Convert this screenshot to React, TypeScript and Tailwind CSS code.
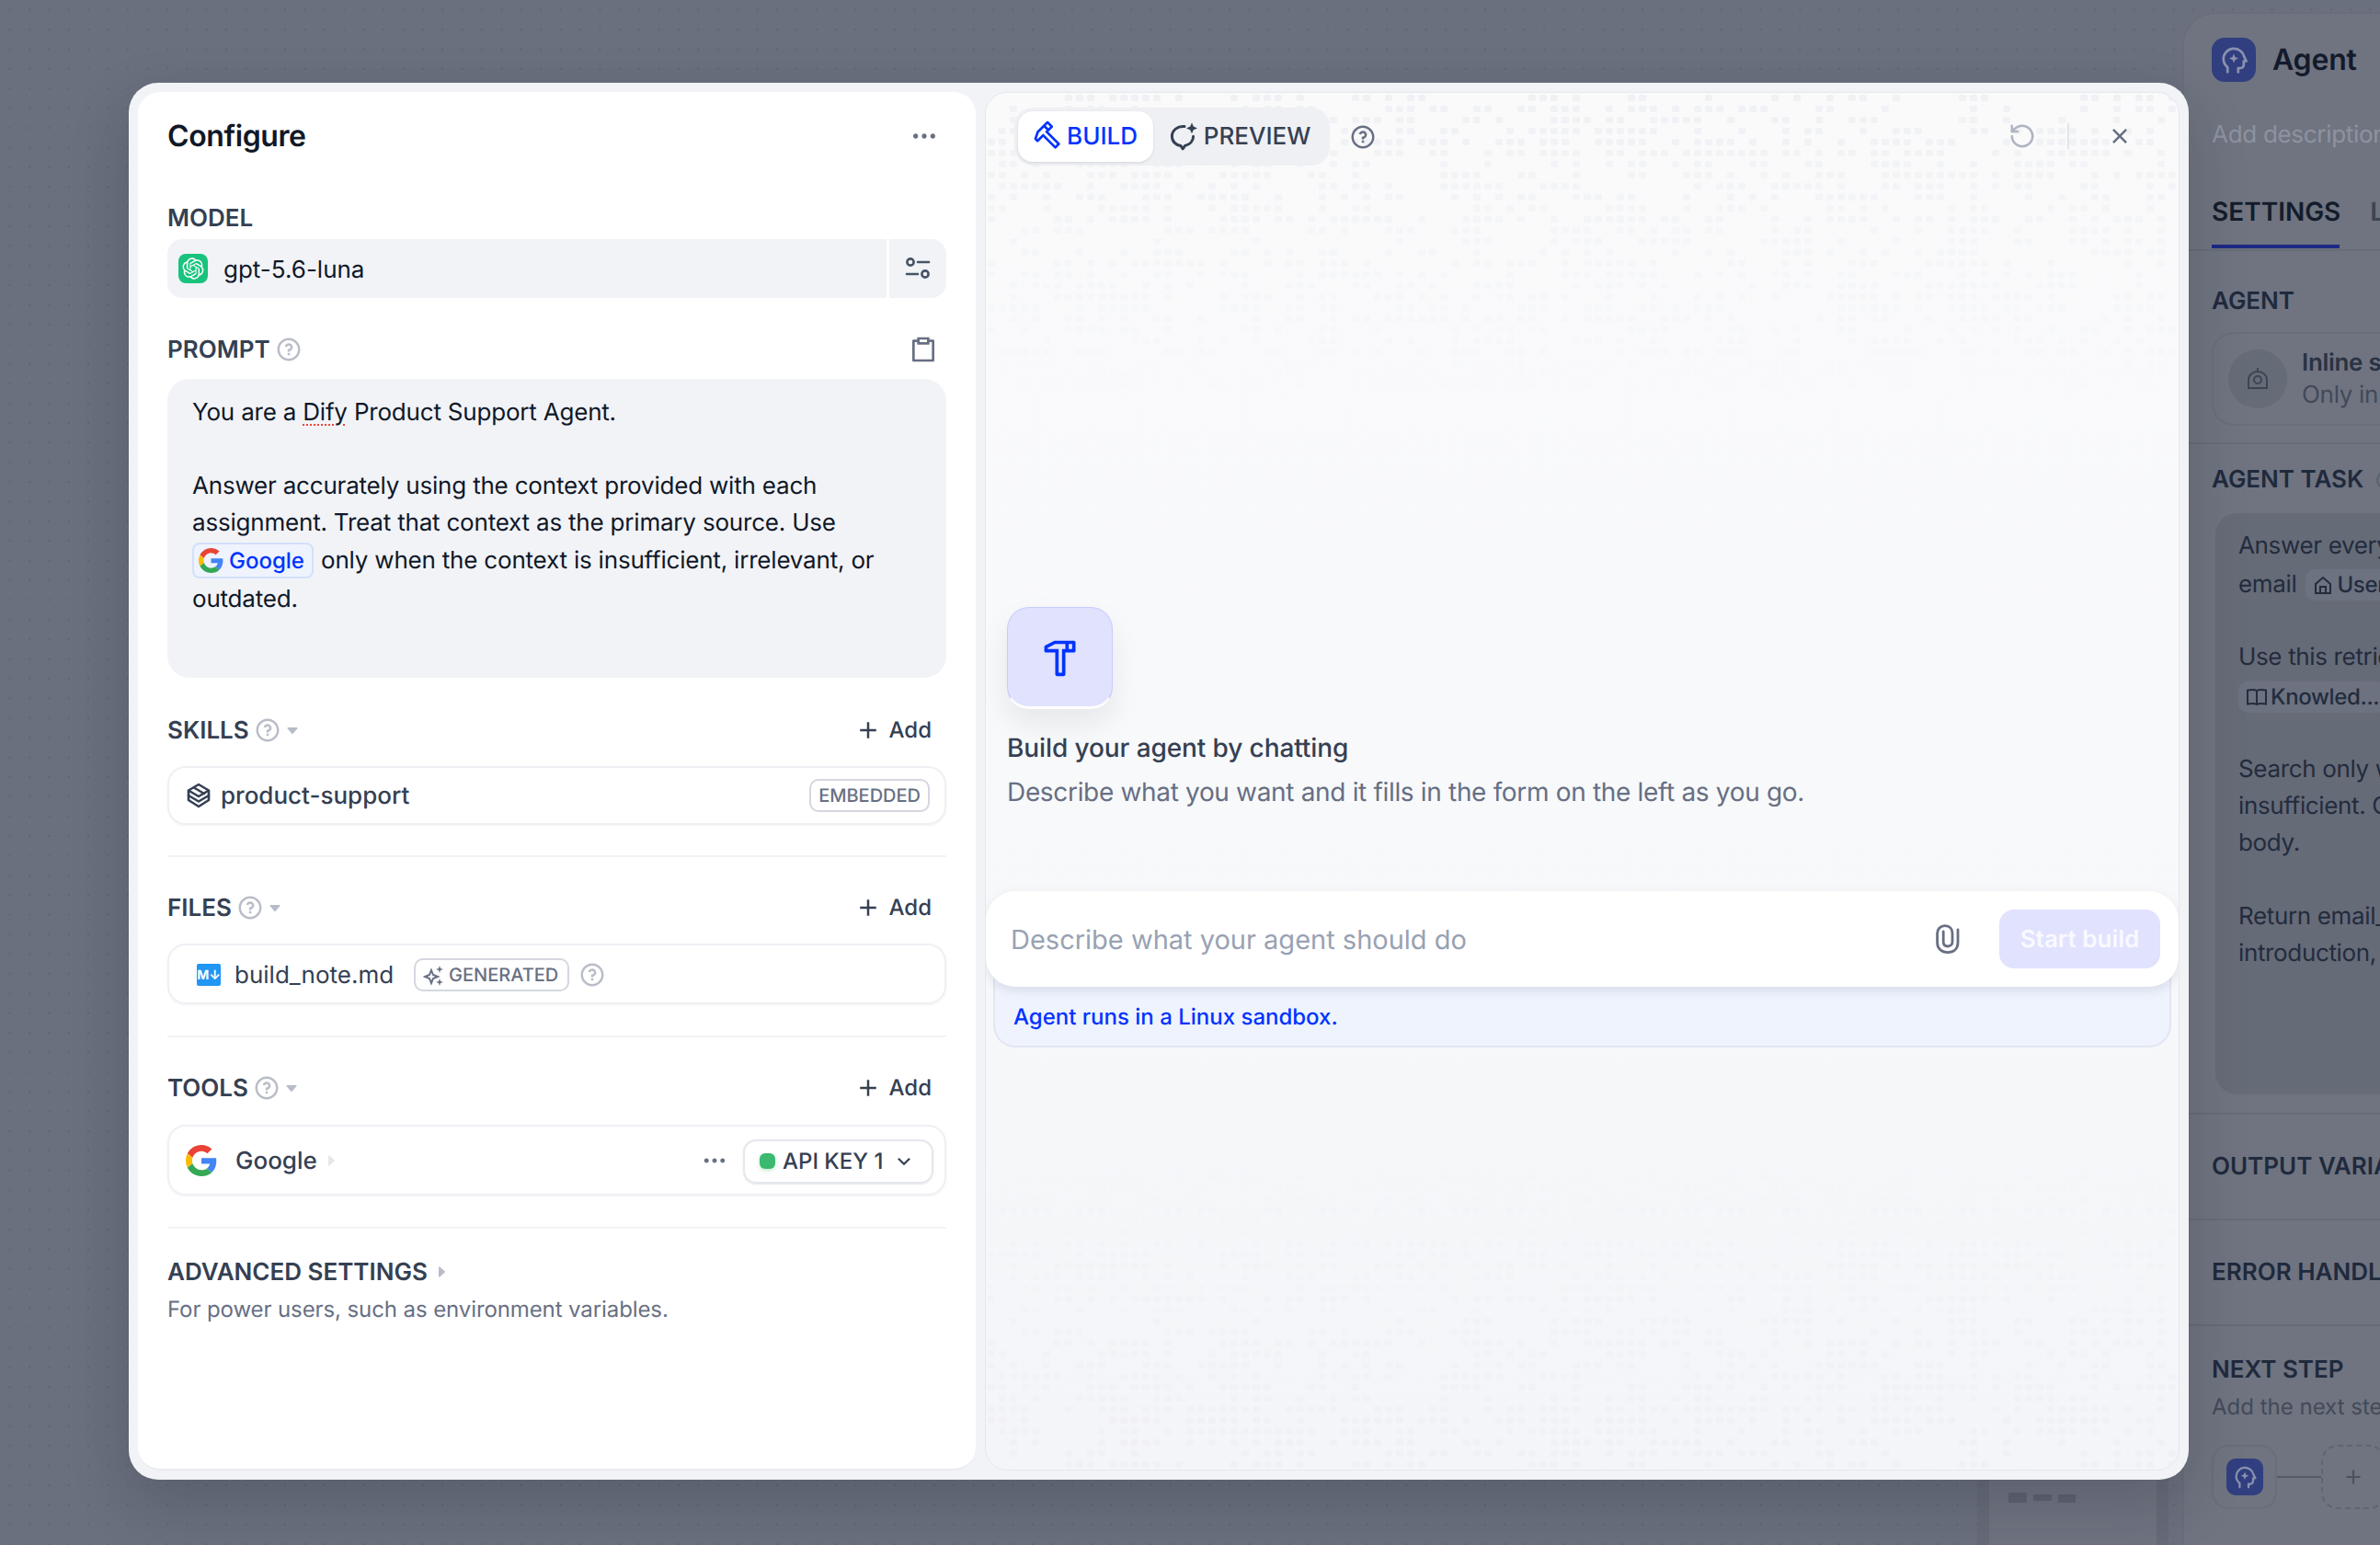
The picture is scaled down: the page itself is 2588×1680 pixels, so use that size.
import React from "react";
import {
  RiAddLine,
  RiArrowDownSLine,
  RiClipboardLine,
  RiCloseLine,
  RiHammerLine,
  RiMoreFill,
  RiQuestionLine,
  RiOpenaiFill,
} from "react-icons/ri";
import { RotateCcw } from "lucide-react";

function GoogleG({ size }: { size: number }) {
  return (
    <svg width={size} height={size} viewBox="0 0 48 48" className="shrink-0">
      <path fill="#EA4335" d="M24 9.5c3.54 0 6.71 1.22 9.21 3.6l6.85-6.85C35.9 2.38 30.47 0 24 0 14.62 0 6.51 5.38 2.56 13.22l7.98 6.19C12.43 13.72 17.74 9.5 24 9.5z" />
      <path fill="#4285F4" d="M46.98 24.55c0-1.57-.15-3.09-.38-4.55H24v9.02h12.94c-.58 2.96-2.26 5.48-4.78 7.18l7.73 6c4.51-4.18 7.09-10.36 7.09-17.65z" />
      <path fill="#FBBC05" d="M10.53 28.59c-.48-1.45-.76-2.99-.76-4.59s.27-3.14.76-4.59l-7.98-6.19C.92 16.46 0 20.12 0 24c0 3.88.92 7.54 2.56 10.78l7.97-6.19z" />
      <path fill="#34A853" d="M24 48c6.48 0 11.93-2.13 15.89-5.81l-7.73-6c-2.15 1.45-4.92 2.3-8.16 2.3-6.26 0-11.57-4.22-13.47-9.91l-7.98 6.19C6.51 42.62 14.62 48 24 48z" />
    </svg>
  );
}

function Caret({ right = false, light = false }: { right?: boolean; light?: boolean }) {
  return (
    <svg width="14" height="14" viewBox="0 0 14 14" className={right ? "-rotate-90 shrink-0" : "shrink-0"}>
      <path d="M2.2 4h9.6a.8.8 0 0 1 .6 1.3l-4.8 5.4a.8.8 0 0 1-1.2 0L1.6 5.3A.8.8 0 0 1 2.2 4z" fill={light ? "#e6e8ed" : "#b8bcc8"} />
    </svg>
  );
}

function Help({ size = 30 }: { size?: number }) {
  return <RiQuestionLine size={size} className="text-[#b9bdc8] shrink-0" />;
}

function Sliders() {
  return (
    <svg width="30" height="30" viewBox="0 0 30 30" fill="none" stroke="#475467" strokeWidth="2.6" strokeLinecap="round">
      <circle cx="7" cy="8" r="3.6" />
      <path d="M15 8h12" />
      <path d="M3 21h12" />
      <circle cx="23" cy="21" r="3.6" />
    </svg>
  );
}

function BoxIcon() {
  return (
    <svg width="28" height="30" viewBox="0 0 28 30" fill="none" stroke="#344054" strokeWidth="2.6" strokeLinejoin="round" strokeLinecap="round" className="shrink-0">
      <path d="M14 3 L25 9.5 L14 16 L3 9.5 Z" />
      <path d="M3 10 V20 L14 27 L25 20 V10" />
      <path d="M3 15 L14 21.5 L25 15" />
      <path d="M9 6.5 L20 13" />
    </svg>
  );
}

function Sparks() {
  return (
    <svg width="24" height="24" viewBox="0 0 24 24" fill="none" stroke="#676f83" strokeWidth="2" className="shrink-0">
      <path d="M9 7 L11 12 L16 14 L11 16 L9 21 L7 16 L2 14 L7 12 Z" />
      <path d="M18 2 L19 5 L22 6 L19 7 L18 10 L17 7 L14 6 L17 5 Z" fill="#676f83" stroke="none" />
      <path d="M18 16 L19 19 L22 20 L19 21 L18 24 L17 21 L14 20 L17 19 Z" fill="#676f83" stroke="none" />
    </svg>
  );
}

function PreviewIcon() {
  return (
    <svg width="32" height="32" viewBox="0 0 32 32" fill="none" className="shrink-0">
      <path d="M17 4.6C9.6 3.8 3.4 8.6 3.4 15.2c0 5.4 4 9.6 9.6 10.4l2.2 3.2 2.4-3.4c5.2-1.2 9-5.2 9-10.2" stroke="#354052" strokeWidth="3" strokeLinejoin="round" strokeLinecap="round" />
      <path d="M25 0.5 L26.8 4.6 L31 6.4 L26.8 8.2 L25 12.3 L23.2 8.2 L19 6.4 L23.2 4.6 Z" fill="#354052" />
    </svg>
  );
}

function Clip() {
  return (
    <svg width="30" height="34" viewBox="0 0 30 34" fill="none" stroke="#676f83" strokeWidth="2.8" strokeLinecap="round">
      <path d="M26 7 V21 C26 27.6 21.6 31.6 15 31.6 C8.4 31.6 3.6 27.6 3.6 21 V11 C3.6 6 7 2.6 12 2.6 C17 2.6 20 6 20 11 V20 C20 23 18 25 15 25 C12 25 10.2 23 10.2 20 V9" />
    </svg>
  );
}

function HeadIcon({ size, color }: { size: number; color: string }) {
  return (
    <svg width={size} height={size} viewBox="0 0 24 24" fill="none" stroke={color} strokeWidth="1.8" strokeLinecap="round" strokeLinejoin="round">
      <path d="M7.5 21v-3.6C5.6 15.9 4.5 13.8 4.5 11.4a7.6 7.6 0 0 1 15-1.6l1.6 3.2h-1.9v2.6a2.4 2.4 0 0 1-2.4 2.4h-1.6V21" />
      <path d="M12 7.6l1 2.4 2.4 1-2.4 1-1 2.4-1-2.4-2.4-1 2.4-1z" fill={color} stroke="none" />
    </svg>
  );
}

function SectionLabel({ children }: { children: React.ReactNode }) {
  return <span className="pt-[2px] text-[26px] leading-[40px] font-semibold text-[#354052]">{children}</span>;
}

function AddButton() {
  return (
    <div className="flex items-center gap-[8px] text-[24px] font-medium text-[#354052] pr-[16px]">
      <RiAddLine size={30} />
      <span>Add</span>
    </div>
  );
}

function SectionHead({ label, mt }: { label: string; mt: string }) {
  return (
    <div className={`${mt} h-[40px] flex items-center justify-between`}>
      <div className="flex items-center gap-[5px]">
        <SectionLabel>{label}</SectionLabel>
        <Help />
        <Caret />
      </div>
      <AddButton />
    </div>
  );
}

function Divider({ mt }: { mt: string }) {
  return <div className={`${mt} h-[2px] bg-[#f2f3f6]`} />;
}

const rnd = (() => {
  let s = 12345;
  return () => {
    s = (s * 1664525 + 1013904223) >>> 0;
    return (s >>> 8) / 16777216;
  };
})();

const blocks: number[][] = [];
for (let r = 0; r < 12; r++) {
  const row: number[] = [];
  for (let c = 0; c < 40; c++) row.push(rnd());
  blocks.push(row);
}
const squares: { x: number; y: number; o: number }[] = [];
for (let r = 0; r < 29; r++) {
  for (let c = 0; c < 108; c++) {
    const b = blocks[Math.floor(r / 3)][Math.floor(c / 3)];
    if (rnd() < 0.15 + 0.6 * b) {
      squares.push({ x: c * 12 + 2, y: r * 12 + 2, o: Math.max(0, 0.75 * Math.pow(1 - r / 29, 1.3)) });
    }
  }
}

function DotField({ className }: { className: string }) {
  return (
    <svg width="1300" height="360" viewBox="0 0 1300 360" className={className}>
      {squares.map((s, i) => (
        <rect key={i} x={s.x} y={s.y} width="8" height="7" rx="2" fill="#eceef2" fillOpacity={s.o} />
      ))}
    </svg>
  );
}

function BackPanel() {
  const heading = "text-[26px] leading-[40px] font-semibold text-[#1f2a3d] whitespace-nowrap";
  const rule = "h-[2px] bg-[#666c78] -mx-[32px]";
  return (
    <div className="w-[215px] h-[1667px] mt-[13px] rounded-tl-[36px] border-t-[2px] border-l-[2px] border-[#696e7a] bg-[#6f7480] pl-[30px] overflow-hidden shrink-0">
      <div className="w-[400px]">
        <div className="flex items-center gap-[18px] h-[48px] mt-[26px]">
          <div className="w-[48px] h-[48px] rounded-[14px] bg-[#313f80] flex items-center justify-center">
            <HeadIcon size={36} color="#8a92ad" />
          </div>
          <span className="text-[32px] font-semibold text-[#131a2b] tracking-[-0.2px]">Agent</span>
        </div>
        <div className="mt-[38px] text-[26px] leading-[40px] text-[#8d93a0] whitespace-nowrap tracking-[-0.3px]">Add description...</div>
        <div className="mt-[41px] flex gap-[32px]">
          <div>
            <div className="text-[28px] leading-[44px] font-semibold text-[#141c2b]">SETTINGS</div>
            <div className="mt-[14px] h-[4px] w-[139px] bg-[#1c2a85]" />
          </div>
          <div className="text-[28px] leading-[44px] font-semibold text-[#3e4552]">LAST RUN</div>
        </div>
        <div className={`mt-[1px] ${rule}`} />
        <div className={`mt-[35px] ${heading}`}>AGENT</div>
        <div className="mt-[13px] h-[102px] w-[300px] rounded-[24px] border-[2px] border-[#696e7a] flex items-center pl-[16px] gap-[16px]">
          <div className="w-[64px] h-[64px] rounded-full bg-[#666b78] flex items-center justify-center shrink-0">
            <svg width="26" height="26" viewBox="0 0 26 26" fill="none" stroke="#3e4552" strokeWidth="2">
              <path d="M3 23 V14 C3 9 7.5 5 13 5 C18.5 5 23 9 23 14 V23 Z" />
              <circle cx="13" cy="14" r="4" />
              <path d="M13 1v4" />
            </svg>
          </div>
          <div className="text-[26px] leading-[35px] tracking-[-0.3px]">
            <div className="font-semibold text-[#2a3243] whitespace-nowrap">Inline skill</div>
            <div className="text-[#434a58] whitespace-nowrap">Only in this</div>
          </div>
        </div>
        <div className={`mt-[18px] ${rule}`} />
        <div className={`mt-[19px] flex items-center gap-[12px] ${heading}`}>
          AGENT TASK <RiQuestionLine size={26} className="text-[#5b6270]" />
        </div>
        <div className="mt-[16px] ml-[4px] h-[632px] rounded-[24px] bg-[#666b78] pl-[25px] pt-[16px] text-[26px] leading-[40px] text-[#232c3d] whitespace-nowrap tracking-[-0.35px]">
          <div>Answer every</div>
          <div className="flex items-center mt-[2px] gap-[10px]">
            <span>email</span>
            <span className="inline-flex items-center gap-[4px] h-[34px] px-[8px] rounded-[10px] bg-[#6c7280] text-[24px] font-medium">
              <svg width="22" height="22" viewBox="0 0 22 22" fill="none" stroke="#232c3d" strokeWidth="2"><path d="M3 20V10l8-7 8 7v10z" /><path d="M8 20v-7h6v7" /></svg>
              User
            </span>
          </div>
          <div className="mt-[39px]">Use this retrieved</div>
          <div className="mt-[3px] flex h-[40px] items-center">
            <span className="inline-flex items-center gap-[3px] h-[34px] px-[8px] rounded-[10px] bg-[#6c7280] text-[24px] font-medium">
              <svg width="24" height="22" viewBox="0 0 24 22" fill="none" stroke="#232c3d" strokeWidth="2"><path d="M12 4C10 2.8 6 2.8 2 3.5v15c4-.7 8-.7 10 .5 2-1.2 6-1.2 10-.5v-15c-4-.7-8-.7-10 .5zM12 4v15" /></svg>
              Knowled...
            </span>
          </div>
          <div className="mt-[39px]">Search only when</div>
          <div>insufficient. Cite</div>
          <div>body.</div>
          <div className="mt-[40px]">Return email_</div>
          <div>introduction,</div>
        </div>
        <div className={`mt-[20px] ${rule}`} />
        <div className={`mt-[37px] ${heading}`}>OUTPUT VARIABLES</div>
        <div className={`mt-[36px] ${rule}`} />
        <div className={`mt-[37px] ${heading}`}>ERROR HANDLING</div>
        <div className={`mt-[36px] ${rule}`} />
        <div className={`mt-[28px] ${heading}`}>NEXT STEP</div>
        <div className="text-[24px] leading-[40px] text-[#434a58] whitespace-nowrap">Add the next step</div>
        <div className="mt-[21px] flex items-center">
          <div className="w-[71px] h-[70px] rounded-[18px] border-[2px] border-[#696e7a] flex items-center justify-center">
            <div className="w-[40px] h-[40px] rounded-[10px] bg-[#313f80] flex items-center justify-center">
              <HeadIcon size={30} color="#8a92ad" />
            </div>
          </div>
          <div className="w-[48px] h-[2px] bg-[#545a66]" />
          <div className="w-[70px] h-[70px] rounded-[18px] border-[2px] border-dashed border-[#5f6572] flex items-center justify-center text-[#4b515e]">
            <RiAddLine size={26} />
          </div>
        </div>
      </div>
    </div>
  );
}

export default function App() {
  return (
    <div className="relative w-[2588px] h-[1680px] overflow-hidden bg-[#6a707d] bg-[radial-gradient(#5f6572_1px,transparent_1.2px)] bg-[length:21.4px_21.4px] flex justify-end [font-family:Inter,'Noto_Sans',sans-serif] [text-rendering:geometricPrecision]">
      <div className="absolute left-[2150px] top-[1600px] w-[208px] h-[80px] bg-[#666b77] px-[13px]">
        <div className="h-full bg-[#6f7380] pl-[21px] pt-[23px]">
          <div className="flex items-start gap-[7px]">
            <div className="w-[20px] h-[11px] bg-[#5e6370]" />
            <div className="w-[20px] h-[7px] mt-[2px] bg-[#5e6370]" />
            <div className="w-[19px] h-[9px] mt-[2px] bg-[#5e6370]" />
          </div>
        </div>
      </div>
      <BackPanel />

      <div className="absolute left-[140px] top-[90px] w-[2240px] h-[1519px] rounded-[32px] bg-[#f2f3f7] p-[10px] flex gap-[10px] shadow-[0_24px_64px_rgba(20,24,40,0.2)]">
        {/* Left */}
        <div className="w-[911px] shrink-0 rounded-[24px] bg-white px-[32px] border-b-[2px] border-[#e9ebf0] text-[#101828]">
          <div className="h-[96px] flex items-center justify-between">
            <h1 className="text-[32px] font-semibold text-[#101828] tracking-[-0.4px]">Configure</h1>
            <RiMoreFill size={32} className="text-[#676f83] mr-[8px]" />
          </div>
          <div className="mt-[21px] h-[40px] flex items-center">
            <SectionLabel>MODEL</SectionLabel>
          </div>
          <div className="mt-[3px] h-[64px] rounded-[16px] bg-[#f2f3f7] flex items-stretch">
            <div className="flex-1 flex items-center pl-[12px] gap-[17px]">
              <div className="w-[32px] h-[32px] rounded-[8px] bg-[#19c37d] flex items-center justify-center">
                <RiOpenaiFill size={28} className="text-white" />
              </div>
              <span className="pt-[2px] text-[26px] text-[#101828]">gpt-5.6-luna</span>
            </div>
            <div className="w-[65px] border-l-[3px] border-white flex items-center justify-center">
              <Sliders />
            </div>
          </div>
          <div className="mt-[36px] h-[40px] flex items-center justify-between">
            <div className="flex items-center gap-[5px]">
              <SectionLabel>PROMPT</SectionLabel>
              <Help />
            </div>
            <RiClipboardLine size={32} className="text-[#676f83] mr-[9px]" />
          </div>
          <div className="mt-[12px] h-[325px] rounded-[24px] bg-[#f2f3f7] px-[27px] pt-[17px] text-[26px] leading-[40px] text-[#101828] tracking-[-0.2px]">
            <p>
              You are a <span className="underline decoration-dotted decoration-[#f04438] decoration-[2px] underline-offset-[4px]">Dify</span> Product Support Agent.
            </p>
            <p className="mt-[40px]">Answer accurately using the context provided with each</p>
            <p>assignment. Treat that context as the primary source. Use</p>
            <p className="flex items-center h-[43px] pb-[2px] whitespace-nowrap">
              <span className="inline-flex items-center gap-[6px] h-[39px] w-[132px] pl-[5px] mr-[8px] rounded-[8px] bg-[#eef3fe] border-[2px] border-[#d3e0fb] text-[#0033ff] text-[24px] font-medium tracking-[0] shrink-0">
                <GoogleG size={27} />
                Google
              </span>
              <span>only when the context is insufficient, irrelevant, or</span>
            </p>
            <p>outdated.</p>
          </div>

          <SectionHead label="SKILLS" mt="mt-[37px]" />
          <div className="mt-[19px] h-[64px] rounded-[20px] border-[2px] border-[#eef0f4] shadow-[0_1px_3px_rgba(16,24,40,0.05)] flex items-center pl-[18px] pr-[16px]">
            <BoxIcon />
            <span className="ml-[10px] text-[26px] font-medium text-[#354052]">product-support</span>
            <span className="ml-auto h-[36px] px-[8px] rounded-[10px] border-[2px] border-[#d4d7df] flex items-center text-[20px] font-medium text-[#676f83]">EMBEDDED</span>
          </div>
          <Divider mt="mt-[33px]" />

          <SectionHead label="FILES" mt="mt-[35px]" />
          <div className="mt-[19px] h-[66px] rounded-[20px] border-[2px] border-[#eef0f4] shadow-[0_1px_3px_rgba(16,24,40,0.05)] flex items-center pl-[30px] pt-[2px]">
            <span className="w-[26px] h-[24px] rounded-[2px] bg-[#2196f3] text-white text-[14px] font-bold flex items-center justify-center">M↓</span>
            <span className="ml-[15px] text-[26px] text-[#354052]">build_note.md</span>
            <span className="ml-[22px] h-[36px] pl-[8px] pr-[10px] rounded-[10px] border-[2px] border-[#d4d7df] flex items-center gap-[4px] text-[20px] font-medium text-[#676f83]">
              <Sparks />
              GENERATED
            </span>
            <span className="ml-[10px] flex"><Help /></span>
          </div>
          <Divider mt="mt-[34px]" />

          <SectionHead label="TOOLS" mt="mt-[35px]" />
          <div className="mt-[20px] h-[77px] rounded-[20px] border-[2px] border-[#eef0f4] shadow-[0_1px_3px_rgba(16,24,40,0.05)] flex items-center pl-[18px] pr-[12px]">
            <GoogleG size={34} />
            <span className="ml-[20px] pt-[2px] text-[26px] font-medium text-[#354052]">Google</span>
            <span className="ml-[8px]"><Caret right light /></span>
            <RiMoreFill size={30} className="ml-auto text-[#676f83]" />
            <div className="ml-[16px] mt-[2px] h-[48px] w-[207px] rounded-[14px] border-[2px] border-[#e4e7ec] shadow-[0_1px_2px_rgba(16,24,40,0.1)] flex items-center pl-[16px] gap-[8px] text-[24px] font-medium text-[#354052]">
              <span className="w-[17px] h-[17px] rounded-[6px] bg-[#3bba6f] shrink-0 shadow-[0_2px_4px_rgba(59,186,111,0.3)]" />
              API KEY 1
              <RiArrowDownSLine size={26} className="ml-[2px]" />
            </div>
          </div>
          <Divider mt="mt-[34px]" />

          <div className="mt-[27px] h-[40px] flex items-center gap-[8px]">
            <SectionLabel>ADVANCED SETTINGS</SectionLabel>
            <Caret right />
          </div>
          <div className="mt-[1px] text-[24px] leading-[40px] text-[#676f83] tracking-[-0.1px]">For power users, such as environment variables.</div>
        </div>

        {/* Right */}
        <div className="relative flex-1 rounded-[24px] border-[1px] border-[#e6e8ee] bg-gradient-to-b from-[#fafafb] via-[#f8f9fb] to-[#f4f5f8] overflow-hidden">
          <DotField className="absolute left-0 top-0" />
          <DotField className="absolute left-0 bottom-0 -scale-y-100 opacity-70" />
          <div className="relative">
            <div className="h-[80px] pt-[16px] pl-[31px] pr-[49px] flex items-start">
              <div className="h-[63px] w-[343px] rounded-[20px] bg-[#eff0f4] p-[4px] flex">
                <div className="w-[147px] rounded-[16px] bg-white shadow-[0_1px_3px_rgba(16,24,40,0.12)] flex items-center justify-center gap-[4px] text-[#0033ff] text-[26px] font-medium">
                  <RiHammerLine size={32} className="-rotate-45" />
                  BUILD
                </div>
                <div className="flex-1 flex items-center justify-center gap-[6px] text-[#354052] text-[26px] font-medium">
                  <PreviewIcon />
                  PREVIEW
                </div>
              </div>
              <RiQuestionLine size={30} className="ml-[21px] mt-[17px] text-[#676f83]" />
              <div className="ml-auto mt-[16px] flex items-center">
                <RotateCcw size={30} strokeWidth={2} className="text-[#b0b4c0]" />
                <div className="ml-[34px] w-[2px] h-[28px] bg-[#e2e4ea]" />
                <RiCloseLine size={30} className="ml-[40px] text-[#676f83]" />
              </div>
            </div>
            <div className="px-[23px] pt-[479px]">
              <div className="w-[115px] h-[111px] rounded-[24px] bg-[#e0e2fe] border-[1px] border-[#c8ccfd] border-b-[3px] border-b-white shadow-[0_16px_32px_rgba(16,24,40,0.08)] flex items-center justify-center">
                <RiHammerLine size={44} className="text-[#0033ff]" />
              </div>
              <div className="mt-[22px] text-[28px] leading-[40px] font-medium text-[#354052] tracking-[-0.1px]">Build your agent by chatting</div>
              <div className="mt-[8px] text-[28px] leading-[40px] text-[#676f83] tracking-[-0.33px]">Describe what you want and it fills in the form on the left as you go.</div>
            </div>
            <div className="mt-[88px] h-[104px] rounded-[32px] bg-white shadow-[0_4px_12px_rgba(16,24,40,0.1)] flex items-center pl-[27px] pr-[20px] relative z-10">
              <span className="pt-[2px] text-[29px] text-[#98a2b3]">Describe what your agent should do</span>
              <span className="ml-auto mr-[41px]"><Clip /></span>
              <div className="w-[175px] h-[64px] rounded-[16px] bg-[#e0e2fe] flex items-center justify-center text-[26px] font-semibold text-white/80">Start build</div>
            </div>
            <div className="mx-[8px] -mt-[24px] h-[90px] rounded-b-[24px] bg-[#eef3fe] border-[2px] border-t-0 border-[#e2e6f2] pt-[26px] pl-[20px] flex items-center text-[24px] font-medium text-[#0033ff]">
              Agent runs in a Linux sandbox.
            </div>
          </div>
        </div>
      </div>
    </div>
  );
}
